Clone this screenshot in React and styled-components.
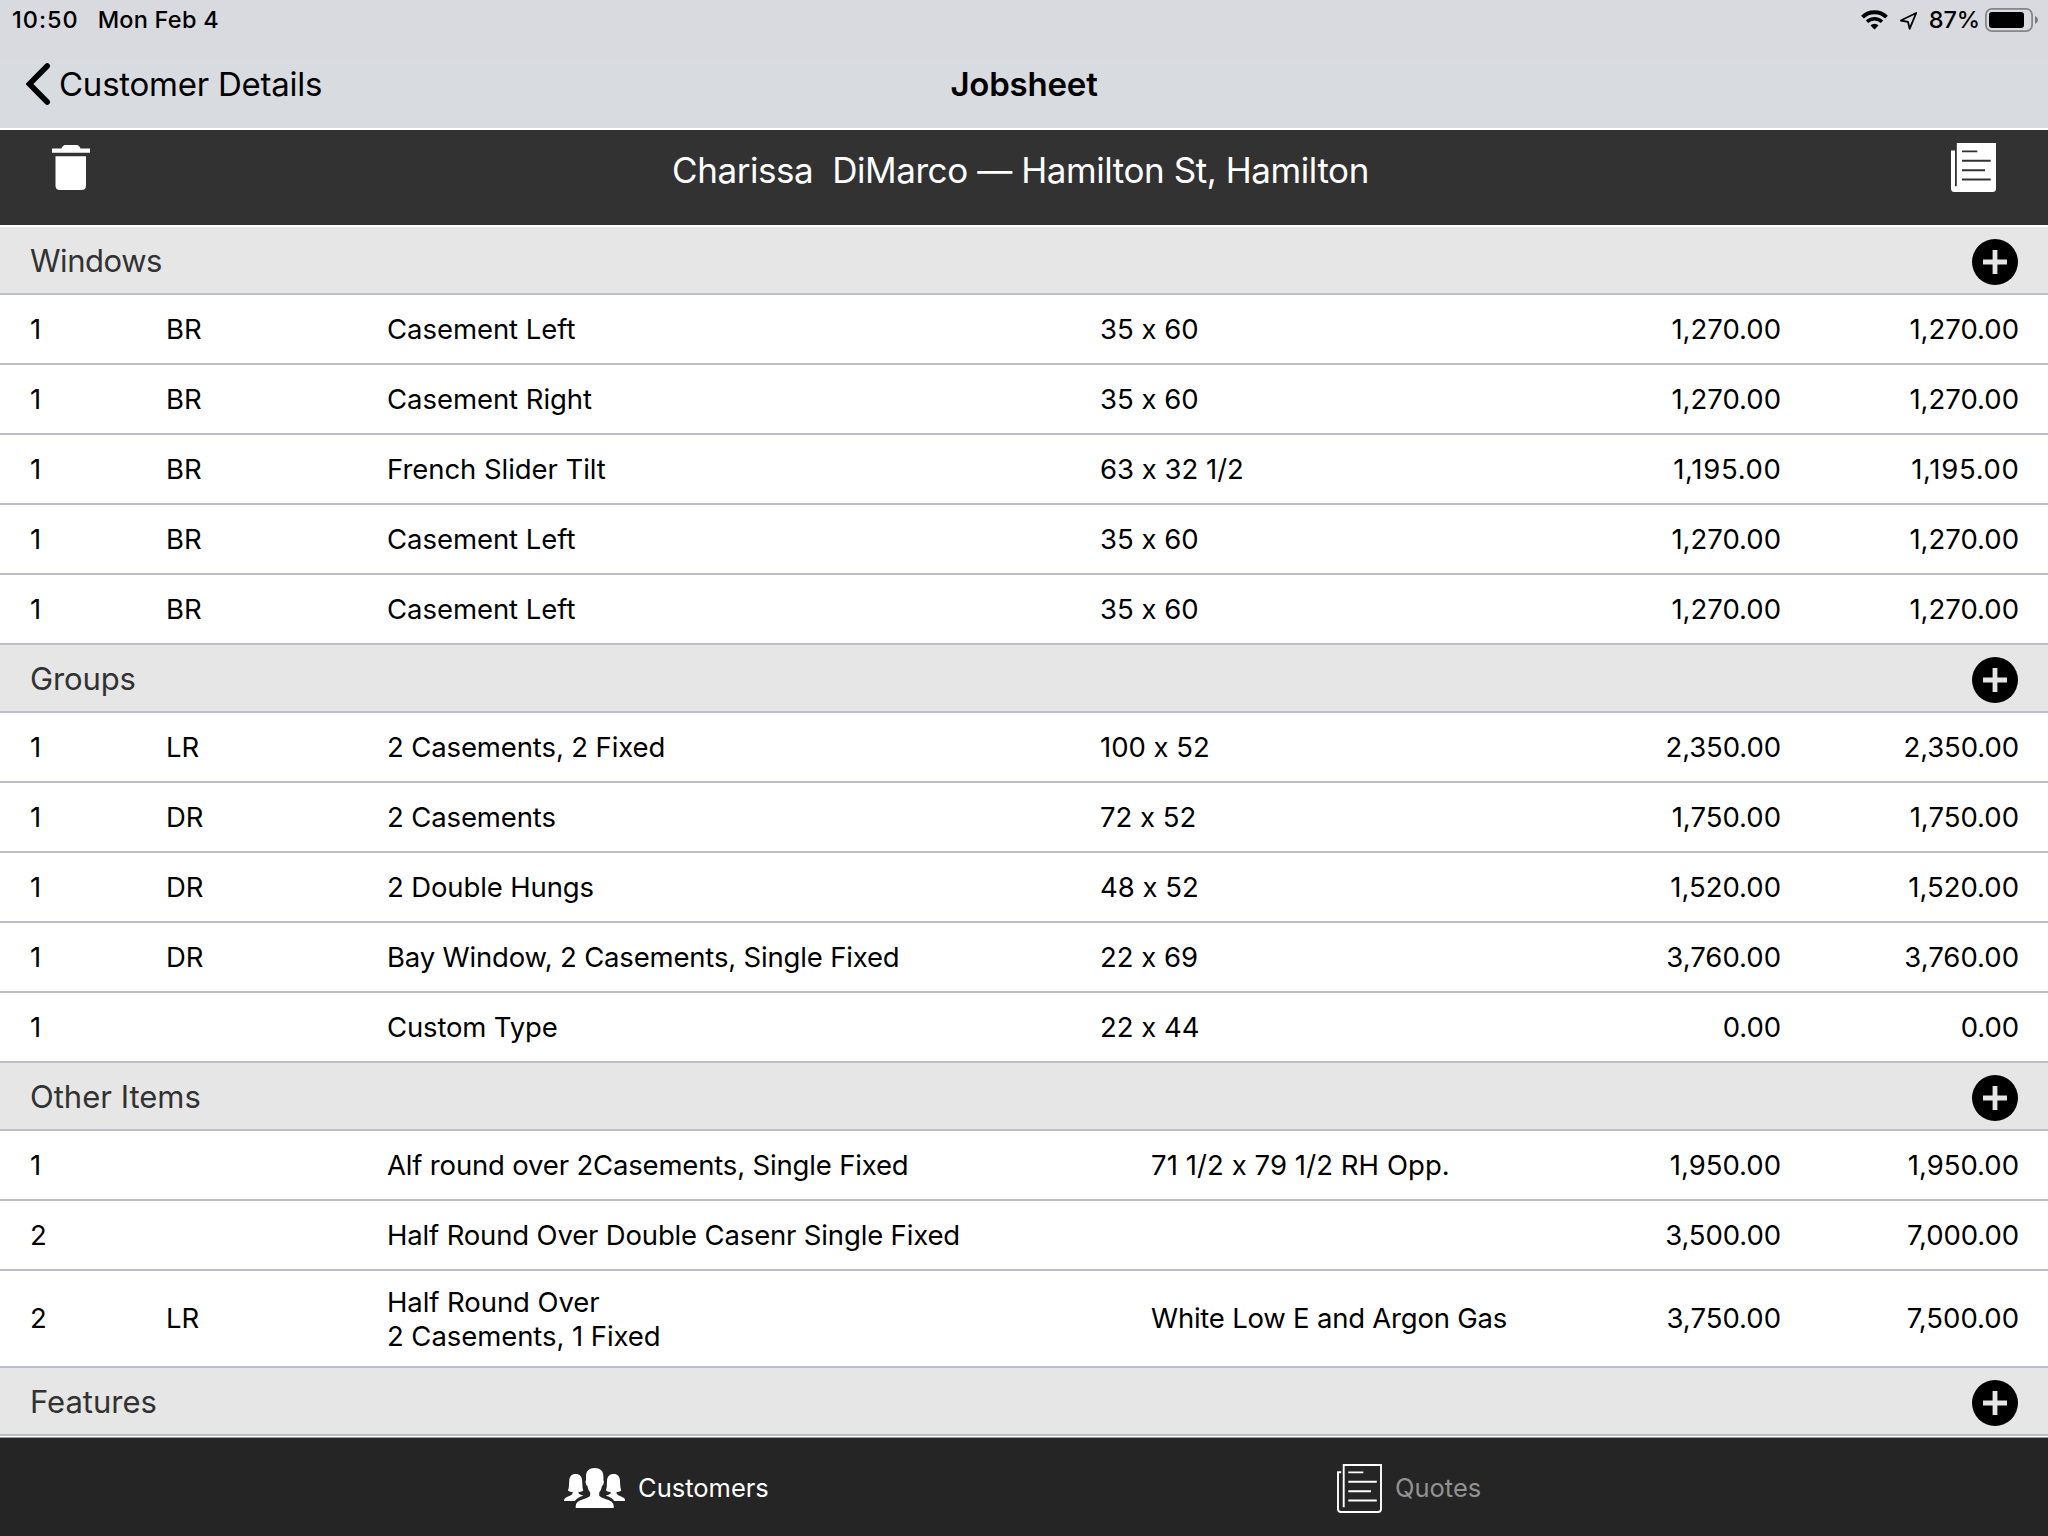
import React from "react";
import styled, { createGlobalStyle } from "styled-components";

const GlobalStyle = createGlobalStyle`
  *, *::before, *::after { box-sizing: border-box; }
  body {
    margin: 0;
    background: #ffffff;
    font-family: "Inter", "Liberation Sans", sans-serif;
    color: #000000;
    overflow: hidden;
  }
`;

const Screen = styled.div`
  display: flex;
  flex-direction: column;
  width: 2048px;
  height: 1536px;
  overflow: hidden;
  background: #ffffff;
`;

const Header = styled.header`
  flex: none;
  height: 130px;
  border-bottom: 2px solid #ffffff;
  background: linear-gradient(#d9dadf 0, #d9dadf 60px, #d8dce1 60px);
`;

const StatusBar = styled.div`
  display: flex;
  align-items: center;
  justify-content: space-between;
  height: 40px;
  padding: 0 10px 0 12px;
  font-size: 23.5px;
  font-weight: 500;
`;

const StatusLeft = styled.div`
  display: flex;
  gap: 19px;
`;

const StatusRight = styled.div`
  display: flex;
  align-items: center;
`;

const Label = styled.span`
  white-space: pre;
  letter-spacing: ${(p) => p.$track || 0}px;
`;

const RaisedLabel = styled(Label)`
  padding-bottom: 2px;
`;

const WifiIcon = styled.svg`
  width: 27px;
  height: 20px;
  margin-right: 11px;
`;

const LocationIcon = styled.svg`
  width: 19px;
  height: 19px;
  margin-right: 11px;
`;

const BatteryIcon = styled.svg`
  width: 53px;
  height: 24px;
  margin-left: 5px;
`;

const NavBar = styled.nav`
  display: grid;
  grid-template-columns: 1fr auto 1fr;
  align-items: center;
  height: 88px;
  padding: 0 26px;
  font-size: 33px;
`;

const BackButton = styled.button`
  display: flex;
  align-items: center;
  gap: 8px;
  padding: 0;
  border: 0;
  background: none;
  color: inherit;
  font: inherit;
`;

const NavTitle = styled.h1`
  margin: 0;
  font-size: 33px;
  font-weight: 600;
  letter-spacing: -0.2px;
`;

const CustomerBar = styled.div`
  flex: none;
  display: flex;
  align-items: flex-start;
  justify-content: space-between;
  height: 97px;
  padding: 13px 52px 0;
  border-bottom: 2px solid #ffffff;
  background: #323232;
  color: #ffffff;
`;

const CustomerName = styled.h2`
  margin: 5px 0 0;
  font-size: 35px;
  line-height: 45px;
  font-weight: 400;
  letter-spacing: -0.43px;
  white-space: pre;
`;

const TrashIcon = styled.svg`
  width: 38px;
  height: 45px;
  margin-top: 2px;
`;

const SheetIcon = styled.svg`
  flex: none;
  width: 45px;
  height: 49px;
`;

const Sheet = styled.main`
  flex: 1;
  min-height: 0;
  overflow: hidden;
`;

const SectionHeader = styled.div`
  display: flex;
  align-items: center;
  justify-content: space-between;
  height: 68px;
  padding: 1px 30px 0;
  border-bottom: 2px solid #bbbdca;
  background: #e6e6e6;
  color: #323232;
  font-size: 31px;
`;

const AddButton = styled.button`
  display: flex;
  width: 46px;
  height: 46px;
  margin-top: 3px;
  padding: 0;
  border: 0;
  background: none;
`;

const Row = styled.div`
  display: grid;
  grid-template-columns: 136px 221px ${(p) => (p.$wide ? "764px" : "713px")} 1fr 130px 238px;
  align-items: center;
  height: ${(p) => (p.$tall ? 97 : 70)}px;
  padding: 0 29px 0 30px;
  border-bottom: 2px solid #bbbdca;
  background: #ffffff;
  font-size: 27.5px;
  line-height: 34px;
  font-feature-settings: "calt" 0;
`;

const Cell = styled.div`
  white-space: pre;
  letter-spacing: ${(p) => p.$track || 0}px;
  padding-bottom: ${(p) => (p.$raised ? 1 : 0)}px;
`;

const Amount = styled(Cell)`
  margin-right: ${(p) => -(p.$track || 0)}px;
  text-align: right;
`;

const TabBar = styled.footer`
  flex: none;
  display: grid;
  grid-template-columns: 1fr 1fr;
  height: 99px;
  border-top: 1px solid #9a9a9a;
  background: #252525;
`;

const Tab = styled.div`
  display: flex;
  align-items: center;
  gap: 13px;
  padding: 2px 0 0 ${(p) => p.$indent}px;
  color: ${(p) => (p.$active ? "#ffffff" : "#929292")};
  font-size: 25.5px;
`;

const PeopleIcon = styled.svg`
  width: 61px;
  height: 40px;
`;

const windowsRows = [
  { qty: 1, room: "BR", item: "Casement Left", size: "35 x 60", price: "1,270.00", total: "1,270.00" },
  { qty: 1, room: "BR", item: "Casement Right", size: "35 x 60", price: "1,270.00", total: "1,270.00" },
  { qty: 1, room: "BR", item: "French Slider Tilt", size: "63 x 32 1/2", price: "1,195.00", total: "1,195.00", amountTrack: 0.7 },
  { qty: 1, room: "BR", item: "Casement Left", size: "35 x 60", price: "1,270.00", total: "1,270.00" },
  { qty: 1, room: "BR", item: "Casement Left", size: "35 x 60", price: "1,270.00", total: "1,270.00" },
];

const groupRows = [
  { qty: 1, room: "LR", item: "2 Casements, 2 Fixed", itemTrack: -0.12, size: "100 x 52", price: "2,350.00", total: "2,350.00", amountTrack: -0.1 },
  { qty: 1, room: "DR", item: "2 Casements", itemTrack: -0.12, size: "72 x 52", price: "1,750.00", total: "1,750.00" },
  { qty: 1, room: "DR", item: "2 Double Hungs", itemTrack: -0.12, size: "48 x 52", price: "1,520.00", total: "1,520.00" },
  { qty: 1, room: "DR", item: "Bay Window, 2 Casements, Single Fixed", itemTrack: -0.18, size: "22 x 69", price: "3,760.00", total: "3,760.00" },
  { qty: 1, room: "", item: "Custom Type", itemTrack: -0.15, size: "22 x 44", price: "0.00", total: "0.00", amountTrack: -0.1 },
];

const otherRows = [
  { qty: 1, room: "", item: "Alf round over 2Casements, Single Fixed", itemTrack: -0.17, size: "71 1/2 x 79 1/2 RH Opp.", sizeTrack: 0.08, price: "1,950.00", total: "1,950.00" },
  { qty: 2, room: "", item: "Half Round Over Double Casenr Single Fixed", itemTrack: -0.16, size: "", price: "3,500.00", total: "7,000.00", amountTrack: -0.1 },
  { qty: 2, room: "LR", item: "Half Round Over\n2 Casements, 1 Fixed", itemTrack: -0.07, size: "White Low E and Argon Gas", sizeTrack: -0.22, price: "3,750.00", total: "7,500.00", tall: true },
];

const sections = [
  { title: "Windows", track: -0.45, rows: windowsRows },
  { title: "Groups", track: -0.12, rows: groupRows },
  { title: "Other Items", track: 0, rows: otherRows, wide: true },
  { title: "Features", track: 0, rows: [] },
];

function Section({ title, track, rows, wide }) {
  return (
    <section>
      <SectionHeader>
        <Label $track={track}>{title}</Label>
        <AddButton aria-label={`Add to ${title}`}>
          <svg width="46" height="46" viewBox="0 0 46 46">
            <circle cx="23" cy="23" r="23" fill="#000" />
            <path d="M23 11v24M11 23h24" stroke="#e6e6e6" strokeWidth="4.8" />
          </svg>
        </AddButton>
      </SectionHeader>
      {rows.map((r, i) => (
        <Row key={i} $wide={wide} $tall={r.tall}>
          <Cell $raised={r.tall}>{r.qty}</Cell>
          <Cell $raised={r.tall}>{r.room}</Cell>
          <Cell $track={r.itemTrack || -0.05}>{r.item}</Cell>
          <Cell $raised={r.tall} $track={r.sizeTrack}>{r.size}</Cell>
          <Amount $raised={r.tall} $track={r.amountTrack}>{r.price}</Amount>
          <Amount $raised={r.tall} $track={r.amountTrack}>{r.total}</Amount>
        </Row>
      ))}
    </section>
  );
}

export default function App() {
  return (
    <Screen>
      <GlobalStyle />
      <Header>
        <StatusBar>
          <StatusLeft>
            <RaisedLabel $track={0.98}>10:50</RaisedLabel>
            <RaisedLabel $track={0.23}>Mon Feb 4</RaisedLabel>
          </StatusLeft>
          <StatusRight>
            <WifiIcon viewBox="0 0 27 20" fill="none" stroke="#000">
              <path d="M1.5 7.1A17.3 17.3 0 0 1 25.5 7.1" strokeWidth="4" />
              <path d="M6.03 11.77A10.75 10.75 0 0 1 20.97 11.77" strokeWidth="3.5" />
              <path d="M9.47 15.33A5.8 5.8 0 0 1 17.53 15.33L14.2 19.1Q13.5 19.8 12.8 19.1Z" fill="#000" stroke="none" />
            </WifiIcon>
            <LocationIcon viewBox="0 0 19 19">
              <path d="M1.8 9.5L17.2 2L10.7 17.7L9 10.9Z" fill="none" stroke="#000" strokeWidth="1.8" strokeLinejoin="round" />
            </LocationIcon>
            <RaisedLabel $track={-0.1}>87%</RaisedLabel>
            <BatteryIcon viewBox="0 0 53 24">
              <rect x="0.9" y="0.9" width="46.2" height="22.2" rx="6" fill="none" stroke="#86878b" strokeWidth="1.8" />
              <rect x="4" y="4" width="35" height="16" rx="3" fill="#000" />
              <path d="M50 8Q53 9.5 53 12T50 16Z" fill="#77787c" />
            </BatteryIcon>
          </StatusRight>
        </StatusBar>
        <NavBar>
          <BackButton>
            <svg width="25" height="42" viewBox="0 0 25 42">
              <path d="M21.2 3L3.4 21L21.2 39" fill="none" stroke="#000" strokeWidth="5.6" strokeLinecap="round" strokeLinejoin="miter" />
            </svg>
            <Label $track={-0.24}>Customer Details</Label>
          </BackButton>
          <NavTitle>Jobsheet</NavTitle>
        </NavBar>
      </Header>

      <CustomerBar>
        <TrashIcon viewBox="0 0 38 45" fill="#fff">
          <path d="M0 3.6H9.4Q11 0 13 0H25Q27 0 28.6 3.6H38V7.8H0Z" />
          <path d="M3.5 11.2H34V40.5Q34 45 29.5 45H8Q3.5 45 3.5 40.5Z" />
        </TrashIcon>
        <CustomerName>{"Charissa  DiMarco — Hamilton St, Hamilton"}</CustomerName>
        <SheetIcon viewBox="0 0 45 49">
          <path d="M0 7.5H4V43.2H5.8V0H45V45.5Q45 49 41.5 49H3.5Q0 49 0 45.5Z" fill="#fff" />
          <path d="M11 8.4H26.3M11 17.8H39.7M11 27.2H34M11 36.5H39.7" stroke="#323232" strokeWidth="1.9" />
        </SheetIcon>
      </CustomerBar>

      <Sheet>
        {sections.map((s) => (
          <Section key={s.title} {...s} />
        ))}
      </Sheet>

      <TabBar>
        <Tab $active $indent={564}>
          <PeopleIcon viewBox="0 0 61 40" fill="#fff">
            <path
              id="side-person"
              d="M4 22.6Q5.2 19 5.2 13.5C5.2 8.5 7.5 6 11.6 6S18.2 8.5 18.2 13.5Q18.2 19 19.2 22.6Q17.6 24.2 14.6 23.8V25.6Q16.6 27 19.4 27.8Q13.6 29.2 10.8 33H0Q0 30 3 28.9Q8 27.3 8.6 25.6V23.8Q5.6 24.2 4 22.6Z"
            />
            <use href="#side-person" transform="translate(61.2 0) scale(-1 1)" />
            <path d="M30.7 0C25.2 0 22 3 22 8.4V12.4Q21.3 12.6 21.6 14.4Q22 17.4 23.4 18Q24 22 26.2 24.6V27.6Q25.6 29.2 20 31Q11.7 33.2 11.7 38V40H49.7V38Q49.7 33.2 41.4 31Q35.8 29.2 35.2 27.6V24.6Q37.4 22 38 18Q39.4 17.4 39.8 14.4Q40.1 12.6 39.4 12.4V8.4C39.4 3 36.2 0 30.7 0Z" />
          </PeopleIcon>
          <RaisedLabel>Customers</RaisedLabel>
        </Tab>
        <Tab $indent={313}>
          <SheetIcon viewBox="0 0 45 49" fill="none" stroke="#fff" strokeWidth="1.9">
            <path d="M6.7 43.3V1H44V45Q44 48 41 48H4Q1 48 1 45V8.3H4.2" />
            <path d="M11.3 8.4H26.3M11.3 17.8H39.8M11.3 27.2H34M11.3 36.5H39.8" />
          </SheetIcon>
          <RaisedLabel>Quotes</RaisedLabel>
        </Tab>
      </TabBar>
    </Screen>
  );
}
